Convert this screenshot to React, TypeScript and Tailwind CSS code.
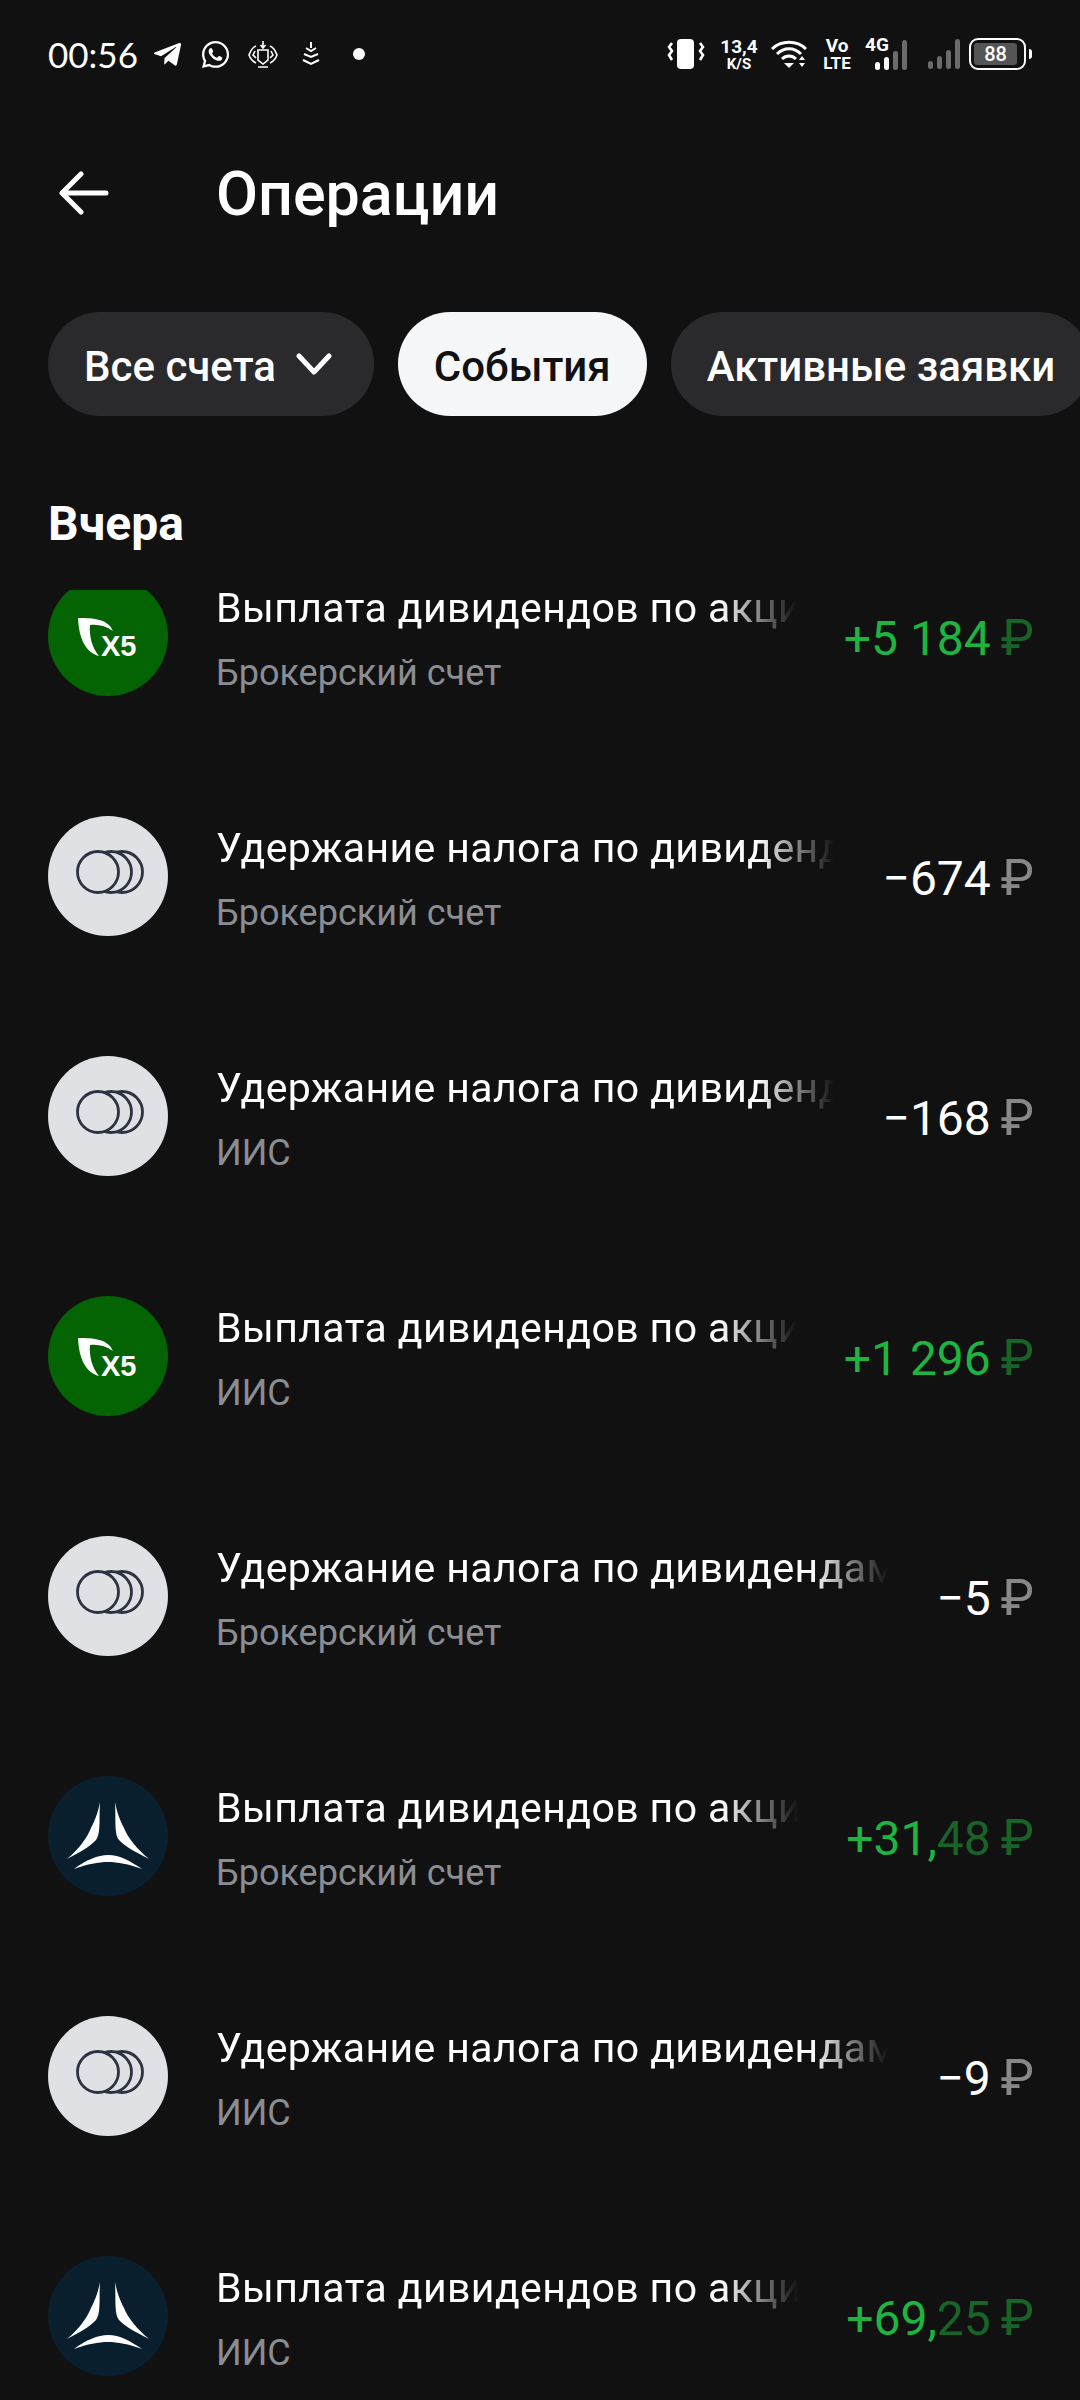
import { FaTelegramPlane, FaWhatsapp } from "react-icons/fa";

type Row = {
  kind: "x5" | "coins" | "delta";
  title: string;
  account: string;
  main: string;
  dim?: string;
  positive: boolean;
};

const rows: Row[] = [
  { kind: "x5", title: "Выплата дивидендов по акциям X5", account: "Брокерский счет", main: "+5 184", positive: true },
  { kind: "coins", title: "Удержание налога по дивидендам X5", account: "Брокерский счет", main: "−674", positive: false },
  { kind: "coins", title: "Удержание налога по дивидендам X5", account: "ИИС", main: "−168", positive: false },
  { kind: "x5", title: "Выплата дивидендов по акциям X5", account: "ИИС", main: "+1 296", positive: true },
  { kind: "coins", title: "Удержание налога по дивидендам X5", account: "Брокерский счет", main: "−5", positive: false },
  { kind: "delta", title: "Выплата дивидендов по акциям Дельта", account: "Брокерский счет", main: "+31,", dim: "48", positive: true },
  { kind: "coins", title: "Удержание налога по дивидендам X5", account: "ИИС", main: "−9", positive: false },
  { kind: "delta", title: "Выплата дивидендов по акциям Дельта", account: "ИИС", main: "+69,", dim: "25", positive: true },
];

function Avatar({ kind }: { kind: Row["kind"] }) {
  if (kind === "x5") {
    return (
      <svg viewBox="0 0 120 120" className="h-[120px] w-[120px] shrink-0">
        <circle cx="60" cy="60" r="60" fill="#046404" />
        <path d="M30 42C46 42 60 43 65 55C58 50 50 48 42 49C41 60 44 72 51 80C37 76 31 62 30 42Z" fill="#fff" />
        <text x="53" y="80" fill="#fff" fontSize="29" fontWeight="700" fontFamily="Liberation Sans, sans-serif">
          X5
        </text>
      </svg>
    );
  }
  if (kind === "coins") {
    return (
      <svg viewBox="0 0 120 120" className="h-[120px] w-[120px] shrink-0">
        <circle cx="60" cy="60" r="60" fill="#dfe1e5" />
        <g stroke="#2d3340" strokeWidth="2.8" fill="#dfe1e5">
          <circle cx="74" cy="56" r="20.5" />
          <circle cx="63" cy="56" r="20.5" />
          <circle cx="50" cy="56" r="20.5" />
        </g>
      </svg>
    );
  }
  return (
    <svg viewBox="0 0 120 120" className="h-[120px] w-[120px] shrink-0">
      <circle cx="60" cy="60" r="60" fill="#0a1f2d" />
      <g fill="#fff">
        <path d="M52 26C51 42 53 58 48 64C42 71 30 77 19 83C31 73 39 62 43 52C48 42 50 36 52 26Z" />
        <path d="M67 26C68 42 66 58 71 64C77 71 90 77 101 83C89 73 80 62 76 52C71 42 69 36 67 26Z" />
        <path d="M26 93C38 84 50 79 60 79C72 79 82 85 94 93C80 88 70 86 60 86C50 86 40 88 26 93Z" />
      </g>
    </svg>
  );
}

function OperationRow({ row }: { row: Row }) {
  const tone = row.positive ? "text-[#1db53f]" : "text-white";
  return (
    <div className="flex h-[120px] items-center">
      <Avatar kind={row.kind} />
      <div className="ml-[48px] min-w-0 flex-1 self-start">
        <div className="h-[64px] overflow-hidden whitespace-nowrap text-[41px] leading-[64px] tracking-[0.4px] text-white [mask-image:linear-gradient(to_right,black_calc(100%-80px),transparent_calc(100%-4px))]">
          {row.title}
        </div>
        <div className="pt-[1px] text-[36px] leading-[64px] text-[#8a8d93]">{row.account}</div>
      </div>
      <div className={`ml-[44px] mt-[4px] shrink-0 whitespace-nowrap text-[48px] leading-[56px] ${tone}`}>
        {row.main}
        {row.dim && <span className="opacity-50">{row.dim}</span>}
        <span className="ml-[10px] text-[50px] opacity-50">₽</span>
      </div>
    </div>
  );
}

function StatusBar() {
  return (
    <div className="flex h-[108px] items-center pl-[48px] pr-[48px] text-white">
      <span className="w-[90px] text-[35px] font-normal leading-none font-['Lato',sans-serif]">00:56</span>
      <FaTelegramPlane className="ml-[14px] h-[31px] w-[31px]" />
      <FaWhatsapp className="ml-[17px] h-[31px] w-[31px]" />
      <svg viewBox="0 0 30 30" className="ml-[17px] h-[30px] w-[30px]" fill="none" stroke="#fff" strokeWidth="1.6">
        <path d="M15 2v6M12.5 6l2.5 3 2.5-3" />
        <path d="M10 11h10v10l-5 4-5-4z" />
        <path d="M8 7C3 9 2 14 1 16c1 3 3 6 7 8M22 7c5 2 6 7 7 9-1 3-3 6-7 8M7 12l-2 4 3 3M23 12l2 4-3 3M10 28h10" />
      </svg>
      <svg viewBox="0 0 18 24" className="ml-[24px] h-[24px] w-[18px]" fill="none" stroke="#fff" strokeWidth="2">
        <path d="M9 0v6M4 6l5 3 5-3M2 12l7 3 7-3M1 18l8 4 8-4" />
      </svg>
      <span className="ml-[33px] h-[12px] w-[12px] rounded-full bg-white" />

      <div className="ml-auto flex items-center">
        <svg viewBox="0 0 38 30" className="h-[30px] w-[38px]" fill="none">
          <rect x="10" y="0" width="17" height="30" rx="4" fill="#fff" />
          <path d="M5 4l-3 4 3 4-3 4 3 5M33 4l3 4-3 4 3 4-3 5" stroke="#fff" strokeWidth="2.6" />
        </svg>
        <div className="ml-[14px] flex w-[40px] flex-col items-center font-['Roboto',sans-serif] font-bold text-white">
          <span className="text-[19px] leading-[20px]">13,4</span>
          <span className="text-[15px] leading-[15px]">K/S</span>
        </div>
        <svg viewBox="0 0 36 30" className="ml-[12px] h-[30px] w-[36px]" fill="none">
          <path d="M1 10C10 1 26 1 35 10M6 15C13 8 23 8 30 15M11 20C15 16 21 16 25 20" stroke="#fff" strokeWidth="3" />
          <path d="M13 24h10l-5 5z" fill="#fff" />
          <path d="M28 21l3-4 3 4zM28 24h6l-3 4z" fill="#fff" />
        </svg>
        <div className="ml-[14px] flex w-[32px] flex-col items-center font-['Roboto',sans-serif] font-bold text-white">
          <span className="text-[19px] leading-[18px]">Vo</span>
          <span className="text-[17px] leading-[17px]">LTE</span>
        </div>
        <div className="relative ml-[12px] h-[32px] w-[44px]">
          <span className="absolute left-0 top-[-3px] font-['Roboto',sans-serif] text-[19px] font-bold leading-[20px] text-white">4G</span>
          <svg viewBox="0 0 34 30" className="absolute bottom-0 left-[10px] h-[30px] w-[34px]">
            <rect x="0" y="22" width="5" height="8" rx="2.5" fill="#fff" />
            <rect x="9" y="17" width="5" height="13" rx="2.5" fill="#fff" />
            <rect x="18" y="11" width="5" height="19" rx="2.5" fill="#6b6b6b" />
            <rect x="27" y="0" width="5" height="30" rx="2.5" fill="#6b6b6b" />
          </svg>
        </div>
        <svg viewBox="0 0 34 30" className="ml-[19px] h-[30px] w-[34px]">
          <rect x="0" y="22" width="5" height="8" rx="2.5" fill="#6b6b6b" />
          <rect x="9" y="17" width="5" height="13" rx="2.5" fill="#6b6b6b" />
          <rect x="18" y="11" width="5" height="19" rx="2.5" fill="#6b6b6b" />
          <rect x="27" y="0" width="5" height="30" rx="2.5" fill="#6b6b6b" />
        </svg>
        <div className="ml-[7px] flex items-center">
          <div className="h-[32px] w-[57px] rounded-[9px] border-2 border-white p-[3px]">
            <div className="flex h-full w-[43px] items-center justify-center rounded-[3px] bg-[#555] font-['Roboto',sans-serif] text-[20px] font-medium leading-none text-white">
              88
            </div>
          </div>
          <span className="ml-[3px] h-[10px] w-[3px] rounded-r-sm bg-white" />
        </div>
      </div>
    </div>
  );
}

export default function App() {
  return (
    <div className="h-[2400px] w-[1080px] overflow-hidden bg-[#111112] font-['Roboto',sans-serif]">
      <StatusBar />

      <header className="mt-[30px] flex h-[110px] items-center pl-[59px]">
        <svg viewBox="0 0 50 44" className="h-[44px] w-[50px]" fill="none" stroke="#fff" strokeWidth="5" strokeLinecap="round" strokeLinejoin="round">
          <path d="M47 22H4M22 3L3 22l19 19" />
        </svg>
        <h1 className="ml-[107px] mt-[3px] text-[61px] font-medium leading-none text-white">Операции</h1>
      </header>

      <nav className="mt-[64px] flex gap-[24px] overflow-hidden pl-[48px]">
        <button className="flex h-[104px] shrink-0 items-center rounded-[52px] bg-[#2a2a2c] pl-[36px] pr-[42px] text-[42px] font-medium text-white">
          <span className="pt-[4px]">Все счета</span>
          <svg viewBox="0 0 36 24" className="ml-[20px] h-[24px] w-[36px]" fill="none" stroke="#fff" strokeWidth="5" strokeLinecap="round" strokeLinejoin="round">
            <path d="M3 4l15 16L33 4" />
          </svg>
        </button>
        <button className="h-[104px] shrink-0 rounded-[52px] bg-[#f6f7f8] px-[36px] pt-[4px] text-[42px] font-medium text-[#111112]">События</button>
        <button className="h-[104px] shrink-0 rounded-[52px] bg-[#2a2a2c] px-[36px] pt-[4px] text-[42px] font-medium text-white">Активные заявки</button>
      </nav>

      <h2 className="mt-[81px] pl-[48px] text-[48px] font-bold leading-[54px] text-white">Вчера</h2>

      <div className="mt-[39px] h-[1810px] overflow-hidden pl-[48px] pr-[46px]">
        <div className="-mt-[14px] flex flex-col gap-[120px]">
          {rows.map((row, i) => (
            <OperationRow key={i} row={row} />
          ))}
        </div>
      </div>
    </div>
  );
}
